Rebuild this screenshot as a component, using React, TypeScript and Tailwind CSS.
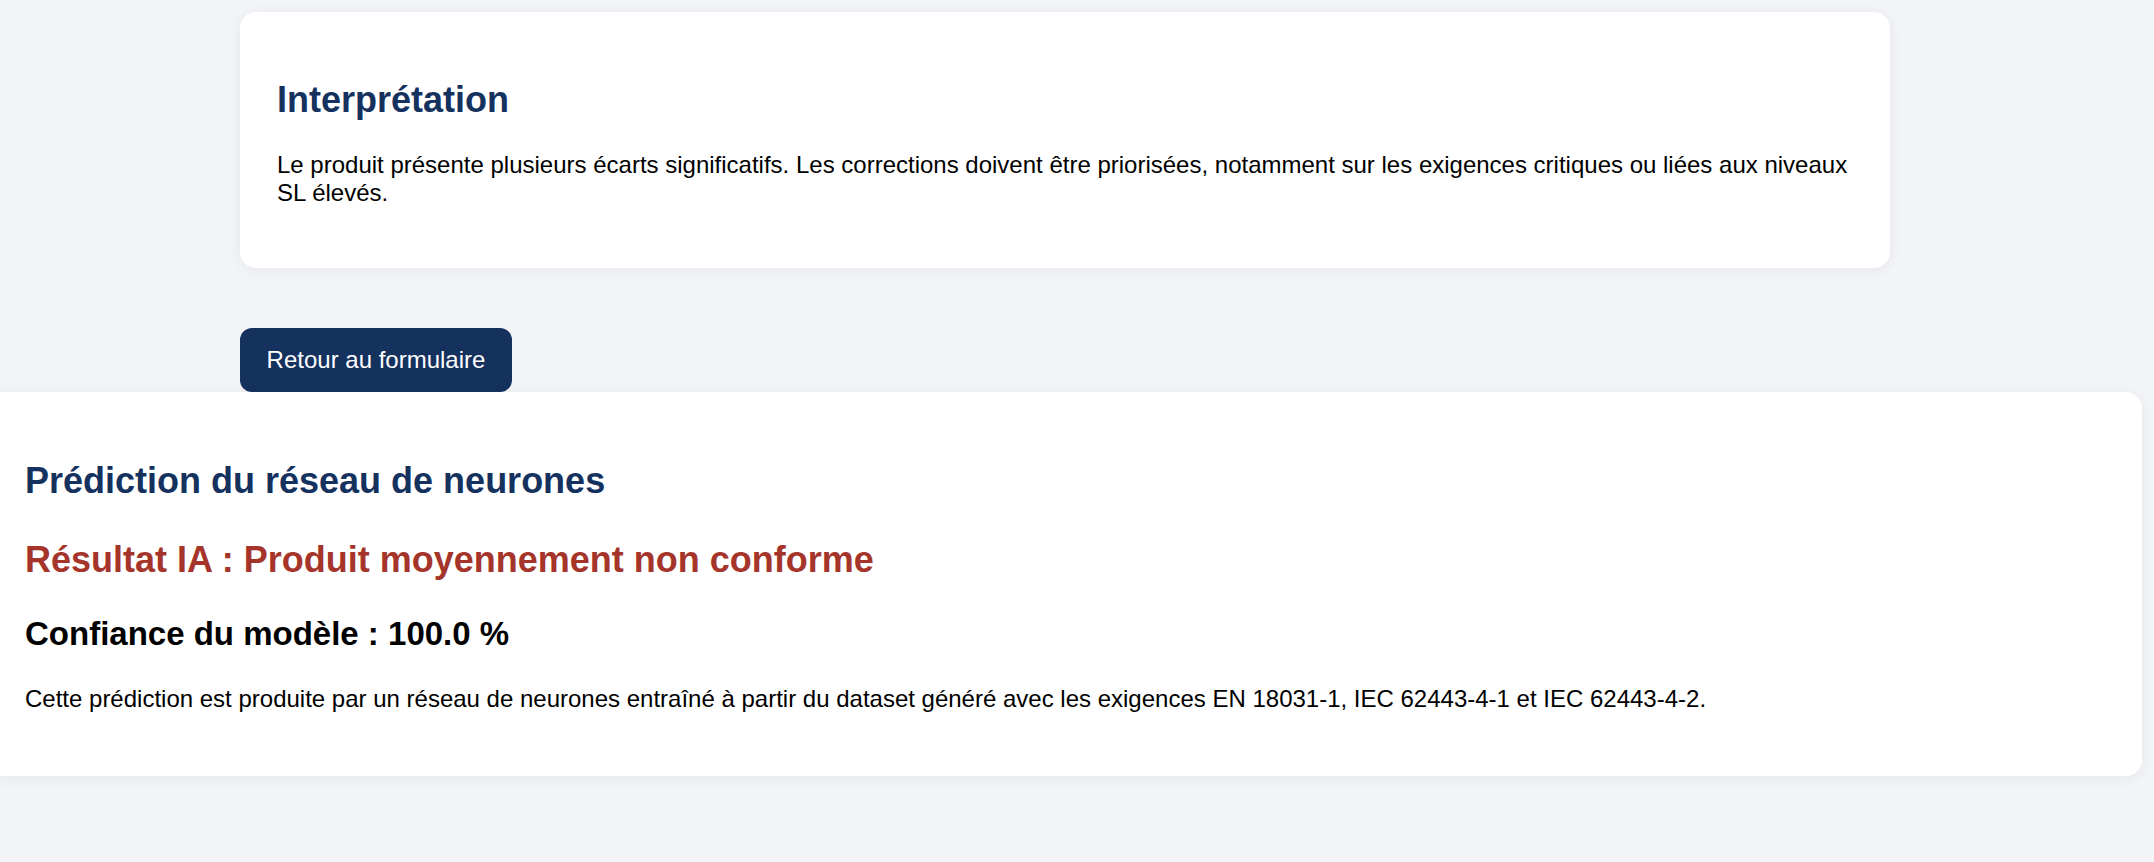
import React from "react";

export default function App() {
  return (
    <div
      className="min-h-screen w-full overflow-hidden bg-[#f3f4f7] pt-[12px] pb-[86px]"
      style={{ fontFamily: '"Liberation Sans", Arial, sans-serif' }}
    >
      <div className="ml-[240px] w-[1650px] rounded-[16px] bg-white pl-[37px] pr-[36px] pt-[67px] pb-[61px] shadow-[0_2px_14px_rgba(0,0,0,0.06)]">
        <h2 className="text-[36px] leading-[41px] font-bold text-[#15325f]">Interprétation</h2>
        <p className="mt-[31px] text-[24px] leading-[28px] text-black">
          Le produit présente plusieurs écarts significatifs. Les corrections doivent être priorisées, notamment sur les exigences critiques ou liées aux niveaux SL élevés.
        </p>
      </div>

      <button className="ml-[240px] mt-[60px] block h-[64px] w-[272px] rounded-[12px] bg-[#15315e] text-[24px] leading-[28px] text-white">
        Retour au formulaire
      </button>

      <div className="ml-[-14px] w-[2156px] rounded-[16px] bg-white pl-[39px] pr-[36px] pt-[68px] pb-[63px] shadow-[0_2px_14px_rgba(0,0,0,0.06)]">
        <h2 className="text-[36px] leading-[41px] font-bold text-[#15325f]">Prédiction du réseau de neurones</h2>
        <h2 className="mt-[38px] text-[36px] leading-[41px] font-bold text-[#a5352a]">
          Résultat IA : Produit moyennement non conforme
        </h2>
        <h3 className="mt-[35px] text-[33px] leading-[38px] font-bold text-black">Confiance du modèle : 100.0 %</h3>
        <p className="mt-[32px] text-[24px] leading-[28px] text-black">
          Cette prédiction est produite par un réseau de neurones entraîné à partir du dataset généré avec les exigences EN 18031-1, IEC 62443-4-1 et IEC 62443-4-2.
        </p>
      </div>
    </div>
  );
}
